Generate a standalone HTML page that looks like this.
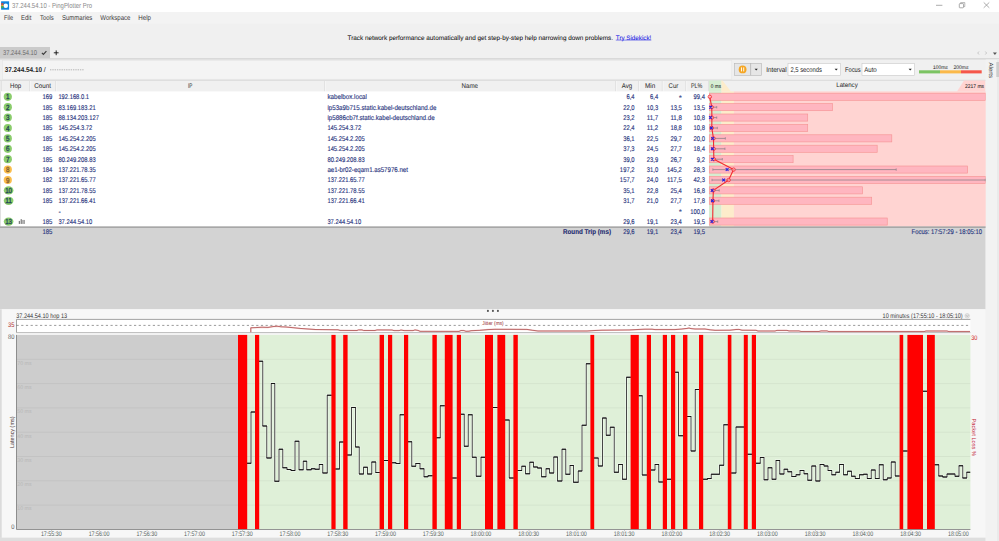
<!DOCTYPE html>
<html><head><meta charset="utf-8"><title>37.244.54.10 - PingPlotter Pro</title>
<style>
html,body{margin:0;padding:0;background:#f0f0f0;overflow:hidden;}
body{width:999px;height:541px;font-family:"Liberation Sans",sans-serif;}
svg{display:block;position:absolute;left:0;top:0;font-family:"Liberation Sans",sans-serif;}
text{white-space:pre;}
</style></head><body>
<svg width="999" height="541" viewBox="0 0 999 541" text-rendering="geometricPrecision">
<rect x="0.00" y="0.00" width="999.00" height="541.00" fill="#f0f0f0" />
<rect x="0.00" y="0.00" width="999.00" height="12.00" fill="#ffffff" />
<rect x="1.10" y="1.30" width="8.00" height="8.40" fill="#0f83dd" />
<rect x="1.20" y="3.20" width="2.30" height="1.60" fill="#e8432e" />
<rect x="1.20" y="4.80" width="2.30" height="1.50" fill="#f5a623" />
<rect x="1.20" y="6.30" width="2.30" height="1.80" fill="#4caf3c" />
<circle cx="5.8" cy="5.7" r="2.2" fill="#fff"/>
<rect x="0.00" y="12.00" width="999.00" height="11.60" fill="#f3f3f3" />
<text x="12.00" y="8.39" font-size="7.3" fill="#8a8a8a" textLength="80.00" lengthAdjust="spacingAndGlyphs" >37.244.54.10 - PingPlotter Pro</text>
<line x1="936.00" y1="5.30" x2="942.40" y2="5.30" stroke="#8a8a8a" stroke-width="0.7" />
<rect x="959.3" y="3.6" width="4.2" height="4.2" rx="0.6" fill="none" stroke="#8a8a8a" stroke-width="0.7"/>
<path d="M960.6 3.4 V2.6 H964.8 V6.6 H963.8" fill="none" stroke="#8a8a8a" stroke-width="0.6"/>
<path d="M983.7 2.4 L989.3 7.8 M989.3 2.4 L983.7 7.8" stroke="#8a8a8a" stroke-width="0.7"/>
<text x="4.00" y="20.22" font-size="7.1" fill="#3a3a3a" textLength="9.00" lengthAdjust="spacingAndGlyphs" >File</text>
<text x="21.00" y="20.22" font-size="7.1" fill="#3a3a3a" textLength="10.30" lengthAdjust="spacingAndGlyphs" >Edit</text>
<text x="40.00" y="20.22" font-size="7.1" fill="#3a3a3a" textLength="13.80" lengthAdjust="spacingAndGlyphs" >Tools</text>
<text x="62.00" y="20.22" font-size="7.1" fill="#3a3a3a" textLength="30.30" lengthAdjust="spacingAndGlyphs" >Summaries</text>
<text x="100.30" y="20.22" font-size="7.1" fill="#3a3a3a" textLength="30.20" lengthAdjust="spacingAndGlyphs" >Workspace</text>
<text x="138.30" y="20.22" font-size="7.1" fill="#3a3a3a" textLength="12.70" lengthAdjust="spacingAndGlyphs" >Help</text>
<text x="347.50" y="39.77" font-size="6.4" fill="#111" stroke="#111" stroke-width="0.05" textLength="265.50" lengthAdjust="spacingAndGlyphs" >Track network performance automatically and get step-by-step help narrowing down problems.</text>
<text x="615.80" y="39.77" font-size="6.4" fill="#1a1ae6" stroke="#1a1ae6" stroke-width="0.05" textLength="35.50" lengthAdjust="spacingAndGlyphs" >Try Sidekick!</text>
<line x1="615.80" y1="40.10" x2="651.30" y2="40.10" stroke="#1a1ae6" stroke-width="0.5" />
<rect x="0.00" y="47.00" width="50.00" height="11.50" fill="#cbcbcb" />
<text x="3.00" y="55.19" font-size="7.0" fill="#6a6a6a" textLength="34.00" lengthAdjust="spacingAndGlyphs" >37.244.54.10</text>
<path d="M41.9 52.9 L43.4 54.5 L46.4 51.1" fill="none" stroke="#3c3c3c" stroke-width="1.15"/>
<path d="M53.8 52.8 H58.6 M56.2 50.4 V55.2" stroke="#111" stroke-width="0.9"/>
<path d="M979 51.5 L977.7 53 L979 54.5" fill="none" stroke="#aaa" stroke-width="0.6"/>
<path d="M985.3 51.5 L986.6 53 L985.3 54.5" fill="none" stroke="#aaa" stroke-width="0.6"/>
<path d="M992.9 52.6 L996.9 52.6 L994.9 55 Z" fill="#555"/>
<line x1="0.00" y1="58.90" x2="999.00" y2="58.90" stroke="#d2d2d2" stroke-width="1.1" />
<rect x="2.4" y="60.6" width="729.4" height="18.6" fill="#f4f4f4" stroke="#e4e4e4" stroke-width="0.6"/>
<text x="4.70" y="72.19" font-size="7.0" fill="#222" font-weight="bold" textLength="37.30" lengthAdjust="spacingAndGlyphs" >37.244.54.10</text>
<text x="43.80" y="72.19" font-size="7.0" fill="#333" stroke="#333" stroke-width="0.05" >/</text>
<line x1="50.00" y1="69.80" x2="84.00" y2="69.80" stroke="#777" stroke-width="0.5" stroke-dasharray="1.4 0.9"/>
<rect x="734.5" y="63.5" width="16.3" height="11.8" fill="#e6e6e6" stroke="#b5b5b5" stroke-width="0.6"/>
<rect x="750.8" y="63.5" width="10.8" height="11.8" fill="#e6e6e6" stroke="#b5b5b5" stroke-width="0.6"/>
<circle cx="742.6" cy="69.4" r="3.9" fill="#f5a623"/>
<path d="M741.5 67.4 V71.4 M743.7 67.4 V71.4" stroke="#fff" stroke-width="0.9"/>
<path d="M754.6 68.7 H757.8 L756.2 70.6 Z" fill="#222"/>
<text x="766.20" y="71.98" font-size="7.0" fill="#222" textLength="20.50" lengthAdjust="spacingAndGlyphs" >Interval</text>
<rect x="788" y="63.5" width="52.6" height="11.8" fill="#fff" stroke="#c9c9c9" stroke-width="0.6"/>
<text x="790.40" y="71.95" font-size="6.9" fill="#222" textLength="31.50" lengthAdjust="spacingAndGlyphs" >2,5 seconds</text>
<path d="M834.6 68.7 H837.8 L836.2 70.6 Z" fill="#222"/>
<text x="845.00" y="71.98" font-size="7.0" fill="#222" textLength="15.60" lengthAdjust="spacingAndGlyphs" >Focus</text>
<rect x="862" y="63.5" width="52.6" height="11.8" fill="#fff" stroke="#c9c9c9" stroke-width="0.6"/>
<text x="864.20" y="71.95" font-size="6.9" fill="#222" textLength="12.60" lengthAdjust="spacingAndGlyphs" >Auto</text>
<path d="M908.6 68.7 H911.8 L910.2 70.6 Z" fill="#222"/>
<rect x="919.00" y="70.30" width="21.00" height="3.10" fill="#7cc463" />
<rect x="940.00" y="70.30" width="21.00" height="3.10" fill="#fbb94a" />
<rect x="961.00" y="70.30" width="20.70" height="3.10" fill="#f5574b" />
<text x="933.00" y="68.85" font-size="5.2" fill="#333" stroke="#333" stroke-width="0.05" textLength="14.80" lengthAdjust="spacingAndGlyphs" >100ms</text>
<text x="953.60" y="68.85" font-size="5.2" fill="#333" stroke="#333" stroke-width="0.05" textLength="14.80" lengthAdjust="spacingAndGlyphs" >200ms</text>
<line x1="0.00" y1="80.30" x2="985.50" y2="80.30" stroke="#d3d3d3" stroke-width="0.8" />
<line x1="29.60" y1="81.00" x2="29.60" y2="91.40" stroke="#d4d4d4" stroke-width="0.7" />
<line x1="30.30" y1="81.00" x2="30.30" y2="91.40" stroke="#fbfbfb" stroke-width="0.7" />
<line x1="55.50" y1="81.00" x2="55.50" y2="91.40" stroke="#d4d4d4" stroke-width="0.7" />
<line x1="56.20" y1="81.00" x2="56.20" y2="91.40" stroke="#fbfbfb" stroke-width="0.7" />
<line x1="324.60" y1="81.00" x2="324.60" y2="91.40" stroke="#d4d4d4" stroke-width="0.7" />
<line x1="325.30" y1="81.00" x2="325.30" y2="91.40" stroke="#fbfbfb" stroke-width="0.7" />
<line x1="615.60" y1="81.00" x2="615.60" y2="91.40" stroke="#d4d4d4" stroke-width="0.7" />
<line x1="616.30" y1="81.00" x2="616.30" y2="91.40" stroke="#fbfbfb" stroke-width="0.7" />
<line x1="638.60" y1="81.00" x2="638.60" y2="91.40" stroke="#d4d4d4" stroke-width="0.7" />
<line x1="639.30" y1="81.00" x2="639.30" y2="91.40" stroke="#fbfbfb" stroke-width="0.7" />
<line x1="662.30" y1="81.00" x2="662.30" y2="91.40" stroke="#d4d4d4" stroke-width="0.7" />
<line x1="663.00" y1="81.00" x2="663.00" y2="91.40" stroke="#fbfbfb" stroke-width="0.7" />
<line x1="685.90" y1="81.00" x2="685.90" y2="91.40" stroke="#d4d4d4" stroke-width="0.7" />
<line x1="686.60" y1="81.00" x2="686.60" y2="91.40" stroke="#fbfbfb" stroke-width="0.7" />
<line x1="708.60" y1="81.00" x2="708.60" y2="91.40" stroke="#d4d4d4" stroke-width="0.7" />
<line x1="709.30" y1="81.00" x2="709.30" y2="91.40" stroke="#fbfbfb" stroke-width="0.7" />
<line x1="1.20" y1="81.00" x2="1.20" y2="91.40" stroke="#d4d4d4" stroke-width="0.7" />
<text x="10.00" y="88.21" font-size="6.8" fill="#303030" stroke="#303030" stroke-width="0.05" textLength="11.20" lengthAdjust="spacingAndGlyphs" >Hop</text>
<text x="34.30" y="88.21" font-size="6.8" fill="#303030" stroke="#303030" stroke-width="0.05" textLength="16.60" lengthAdjust="spacingAndGlyphs" >Count</text>
<text x="188.00" y="88.21" font-size="6.8" fill="#303030" stroke="#303030" stroke-width="0.05" textLength="4.40" lengthAdjust="spacingAndGlyphs" >IP</text>
<text x="461.55" y="88.21" font-size="6.8" fill="#303030" stroke="#303030" stroke-width="0.05" textLength="16.50" lengthAdjust="spacingAndGlyphs" >Name</text>
<text x="621.70" y="88.21" font-size="6.8" fill="#303030" stroke="#303030" stroke-width="0.05" textLength="10.40" lengthAdjust="spacingAndGlyphs" >Avg</text>
<text x="645.10" y="88.21" font-size="6.8" fill="#303030" stroke="#303030" stroke-width="0.05" textLength="10.20" lengthAdjust="spacingAndGlyphs" >Min</text>
<text x="668.60" y="88.21" font-size="6.8" fill="#303030" stroke="#303030" stroke-width="0.05" textLength="9.60" lengthAdjust="spacingAndGlyphs" >Cur</text>
<text x="690.90" y="88.21" font-size="6.8" fill="#303030" stroke="#303030" stroke-width="0.05" textLength="11.40" lengthAdjust="spacingAndGlyphs" >PL%</text>
<rect x="709.00" y="80.50" width="12.46" height="10.90" fill="#d6edd1" />
<path d="M721.46 80.5 L722.46 80.5 L730.93 91.4 L721.46 91.4 Z" fill="#fdeccb"/>
<path d="M964 80.5 L985.3 80.5 L985.3 91.4 L957 91.4 Z" fill="#ffd4d2"/>
<text x="710.80" y="88.02" font-size="5.4" fill="#222" stroke="#222" stroke-width="0.05" textLength="10.20" lengthAdjust="spacingAndGlyphs" >0 ms</text>
<text x="836.25" y="87.14" font-size="6.6" fill="#303030" stroke="#303030" stroke-width="0.05" textLength="21.50" lengthAdjust="spacingAndGlyphs" >Latency</text>
<text x="965.00" y="88.12" font-size="5.4" fill="#222" stroke="#222" stroke-width="0.05" textLength="19.00" lengthAdjust="spacingAndGlyphs" >2217 ms</text>
<rect x="0.00" y="91.40" width="709.00" height="135.20" fill="#ffffff" />
<rect x="709.00" y="91.40" width="12.46" height="135.20" fill="#d6edd1" />
<rect x="721.46" y="91.40" width="12.46" height="135.20" fill="#fdeccb" />
<rect x="733.93" y="91.40" width="251.97" height="135.20" fill="#ffd4d2" />
<circle cx="7.8" cy="96.80" r="4.1" fill="#8bcd6c"/>
<text x="6.05" y="99.33" font-size="7.4" fill="#1b3c55" stroke="#1b3c55" stroke-width="0.3" textLength="3.50" lengthAdjust="spacingAndGlyphs" >1</text>
<text x="42.44" y="99.25" font-size="6.9" fill="#27337d" stroke="#27337d" stroke-width="0.13" textLength="9.96" lengthAdjust="spacingAndGlyphs" >169</text>
<text x="58.40" y="99.25" font-size="6.9" fill="#27337d" stroke="#27337d" stroke-width="0.13" textLength="30.61" lengthAdjust="spacingAndGlyphs" >192.168.0.1</text>
<text x="327.40" y="99.25" font-size="6.9" fill="#27337d" stroke="#27337d" stroke-width="0.13" textLength="39.50" lengthAdjust="spacingAndGlyphs" >kabelbox.local</text>
<text x="626.51" y="99.25" font-size="6.9" fill="#27337d" stroke="#27337d" stroke-width="0.13" textLength="8.09" lengthAdjust="spacingAndGlyphs" >6,4</text>
<text x="650.11" y="99.25" font-size="6.9" fill="#27337d" stroke="#27337d" stroke-width="0.13" textLength="8.09" lengthAdjust="spacingAndGlyphs" >6,4</text>
<text x="679.11" y="100.05" font-size="6.9" fill="#27337d" stroke="#27337d" stroke-width="0.13" >*</text>
<text x="693.49" y="99.25" font-size="6.9" fill="#27337d" stroke="#27337d" stroke-width="0.13" textLength="11.41" lengthAdjust="spacingAndGlyphs" >99,4</text>
<rect x="709.30" y="93.20" width="276.00" height="7.1" fill="#ffb6c0" stroke="#f69494" stroke-width="0.65"/>
<circle cx="7.8" cy="107.20" r="4.1" fill="#8bcd6c"/>
<text x="6.05" y="109.73" font-size="7.4" fill="#1b3c55" stroke="#1b3c55" stroke-width="0.3" textLength="3.50" lengthAdjust="spacingAndGlyphs" >2</text>
<text x="42.44" y="109.65" font-size="6.9" fill="#27337d" stroke="#27337d" stroke-width="0.13" textLength="9.96" lengthAdjust="spacingAndGlyphs" >185</text>
<text x="58.40" y="109.65" font-size="6.9" fill="#27337d" stroke="#27337d" stroke-width="0.13" textLength="37.25" lengthAdjust="spacingAndGlyphs" >83.169.183.21</text>
<text x="327.40" y="109.65" font-size="6.9" fill="#27337d" stroke="#27337d" stroke-width="0.13" textLength="109.00" lengthAdjust="spacingAndGlyphs" >ip53a9b715.static.kabel-deutschland.de</text>
<text x="623.19" y="109.65" font-size="6.9" fill="#27337d" stroke="#27337d" stroke-width="0.13" textLength="11.41" lengthAdjust="spacingAndGlyphs" >22,0</text>
<text x="646.79" y="109.65" font-size="6.9" fill="#27337d" stroke="#27337d" stroke-width="0.13" textLength="11.41" lengthAdjust="spacingAndGlyphs" >10,3</text>
<text x="670.39" y="109.65" font-size="6.9" fill="#27337d" stroke="#27337d" stroke-width="0.13" textLength="11.41" lengthAdjust="spacingAndGlyphs" >13,5</text>
<text x="693.49" y="109.65" font-size="6.9" fill="#27337d" stroke="#27337d" stroke-width="0.13" textLength="11.41" lengthAdjust="spacingAndGlyphs" >13,5</text>
<rect x="709.30" y="103.60" width="123.09" height="7.1" fill="#ffb6c0" stroke="#f69494" stroke-width="0.65"/>
<circle cx="7.8" cy="117.60" r="4.1" fill="#8bcd6c"/>
<text x="6.05" y="120.13" font-size="7.4" fill="#1b3c55" stroke="#1b3c55" stroke-width="0.3" textLength="3.50" lengthAdjust="spacingAndGlyphs" >3</text>
<text x="42.44" y="120.05" font-size="6.9" fill="#27337d" stroke="#27337d" stroke-width="0.13" textLength="9.96" lengthAdjust="spacingAndGlyphs" >185</text>
<text x="58.40" y="120.05" font-size="6.9" fill="#27337d" stroke="#27337d" stroke-width="0.13" textLength="40.57" lengthAdjust="spacingAndGlyphs" >88.134.203.127</text>
<text x="327.40" y="120.05" font-size="6.9" fill="#27337d" stroke="#27337d" stroke-width="0.13" textLength="107.30" lengthAdjust="spacingAndGlyphs" >ip5886cb7f.static.kabel-deutschland.de</text>
<text x="623.19" y="120.05" font-size="6.9" fill="#27337d" stroke="#27337d" stroke-width="0.13" textLength="11.41" lengthAdjust="spacingAndGlyphs" >23,2</text>
<text x="646.79" y="120.05" font-size="6.9" fill="#27337d" stroke="#27337d" stroke-width="0.13" textLength="11.41" lengthAdjust="spacingAndGlyphs" >11,7</text>
<text x="670.39" y="120.05" font-size="6.9" fill="#27337d" stroke="#27337d" stroke-width="0.13" textLength="11.41" lengthAdjust="spacingAndGlyphs" >11,8</text>
<text x="693.49" y="120.05" font-size="6.9" fill="#27337d" stroke="#27337d" stroke-width="0.13" textLength="11.41" lengthAdjust="spacingAndGlyphs" >10,8</text>
<rect x="709.30" y="114.00" width="98.41" height="7.1" fill="#ffb6c0" stroke="#f69494" stroke-width="0.65"/>
<circle cx="7.8" cy="128.00" r="4.1" fill="#8bcd6c"/>
<text x="6.05" y="130.53" font-size="7.4" fill="#1b3c55" stroke="#1b3c55" stroke-width="0.3" textLength="3.50" lengthAdjust="spacingAndGlyphs" >4</text>
<text x="42.44" y="130.45" font-size="6.9" fill="#27337d" stroke="#27337d" stroke-width="0.13" textLength="9.96" lengthAdjust="spacingAndGlyphs" >185</text>
<text x="58.40" y="130.45" font-size="6.9" fill="#27337d" stroke="#27337d" stroke-width="0.13" textLength="33.93" lengthAdjust="spacingAndGlyphs" >145.254.3.72</text>
<text x="327.40" y="130.45" font-size="6.9" fill="#27337d" stroke="#27337d" stroke-width="0.13" textLength="33.93" lengthAdjust="spacingAndGlyphs" >145.254.3.72</text>
<text x="623.19" y="130.45" font-size="6.9" fill="#27337d" stroke="#27337d" stroke-width="0.13" textLength="11.41" lengthAdjust="spacingAndGlyphs" >22,4</text>
<text x="646.79" y="130.45" font-size="6.9" fill="#27337d" stroke="#27337d" stroke-width="0.13" textLength="11.41" lengthAdjust="spacingAndGlyphs" >11,2</text>
<text x="670.39" y="130.45" font-size="6.9" fill="#27337d" stroke="#27337d" stroke-width="0.13" textLength="11.41" lengthAdjust="spacingAndGlyphs" >18,8</text>
<text x="693.49" y="130.45" font-size="6.9" fill="#27337d" stroke="#27337d" stroke-width="0.13" textLength="11.41" lengthAdjust="spacingAndGlyphs" >10,8</text>
<rect x="709.30" y="124.40" width="98.41" height="7.1" fill="#ffb6c0" stroke="#f69494" stroke-width="0.65"/>
<circle cx="7.8" cy="138.40" r="4.1" fill="#8bcd6c"/>
<text x="6.05" y="140.93" font-size="7.4" fill="#1b3c55" stroke="#1b3c55" stroke-width="0.3" textLength="3.50" lengthAdjust="spacingAndGlyphs" >5</text>
<text x="42.44" y="140.85" font-size="6.9" fill="#27337d" stroke="#27337d" stroke-width="0.13" textLength="9.96" lengthAdjust="spacingAndGlyphs" >185</text>
<text x="58.40" y="140.85" font-size="6.9" fill="#27337d" stroke="#27337d" stroke-width="0.13" textLength="37.25" lengthAdjust="spacingAndGlyphs" >145.254.2.205</text>
<text x="327.40" y="140.85" font-size="6.9" fill="#27337d" stroke="#27337d" stroke-width="0.13" textLength="37.25" lengthAdjust="spacingAndGlyphs" >145.254.2.205</text>
<text x="623.19" y="140.85" font-size="6.9" fill="#27337d" stroke="#27337d" stroke-width="0.13" textLength="11.41" lengthAdjust="spacingAndGlyphs" >36,1</text>
<text x="646.79" y="140.85" font-size="6.9" fill="#27337d" stroke="#27337d" stroke-width="0.13" textLength="11.41" lengthAdjust="spacingAndGlyphs" >22,5</text>
<text x="670.39" y="140.85" font-size="6.9" fill="#27337d" stroke="#27337d" stroke-width="0.13" textLength="11.41" lengthAdjust="spacingAndGlyphs" >29,7</text>
<text x="693.49" y="140.85" font-size="6.9" fill="#27337d" stroke="#27337d" stroke-width="0.13" textLength="11.41" lengthAdjust="spacingAndGlyphs" >20,0</text>
<rect x="709.30" y="134.80" width="182.50" height="7.1" fill="#ffb6c0" stroke="#f69494" stroke-width="0.65"/>
<circle cx="7.8" cy="148.80" r="4.1" fill="#8bcd6c"/>
<text x="6.05" y="151.33" font-size="7.4" fill="#1b3c55" stroke="#1b3c55" stroke-width="0.3" textLength="3.50" lengthAdjust="spacingAndGlyphs" >6</text>
<text x="42.44" y="151.25" font-size="6.9" fill="#27337d" stroke="#27337d" stroke-width="0.13" textLength="9.96" lengthAdjust="spacingAndGlyphs" >185</text>
<text x="58.40" y="151.25" font-size="6.9" fill="#27337d" stroke="#27337d" stroke-width="0.13" textLength="37.25" lengthAdjust="spacingAndGlyphs" >145.254.2.205</text>
<text x="327.40" y="151.25" font-size="6.9" fill="#27337d" stroke="#27337d" stroke-width="0.13" textLength="37.25" lengthAdjust="spacingAndGlyphs" >145.254.2.205</text>
<text x="623.19" y="151.25" font-size="6.9" fill="#27337d" stroke="#27337d" stroke-width="0.13" textLength="11.41" lengthAdjust="spacingAndGlyphs" >37,3</text>
<text x="646.79" y="151.25" font-size="6.9" fill="#27337d" stroke="#27337d" stroke-width="0.13" textLength="11.41" lengthAdjust="spacingAndGlyphs" >24,5</text>
<text x="670.39" y="151.25" font-size="6.9" fill="#27337d" stroke="#27337d" stroke-width="0.13" textLength="11.41" lengthAdjust="spacingAndGlyphs" >27,7</text>
<text x="693.49" y="151.25" font-size="6.9" fill="#27337d" stroke="#27337d" stroke-width="0.13" textLength="11.41" lengthAdjust="spacingAndGlyphs" >18,4</text>
<rect x="709.30" y="145.20" width="167.88" height="7.1" fill="#ffb6c0" stroke="#f69494" stroke-width="0.65"/>
<circle cx="7.8" cy="159.20" r="4.1" fill="#8bcd6c"/>
<text x="6.05" y="161.73" font-size="7.4" fill="#1b3c55" stroke="#1b3c55" stroke-width="0.3" textLength="3.50" lengthAdjust="spacingAndGlyphs" >7</text>
<text x="42.44" y="161.65" font-size="6.9" fill="#27337d" stroke="#27337d" stroke-width="0.13" textLength="9.96" lengthAdjust="spacingAndGlyphs" >185</text>
<text x="58.40" y="161.65" font-size="6.9" fill="#27337d" stroke="#27337d" stroke-width="0.13" textLength="37.25" lengthAdjust="spacingAndGlyphs" >80.249.208.83</text>
<text x="327.40" y="161.65" font-size="6.9" fill="#27337d" stroke="#27337d" stroke-width="0.13" textLength="37.25" lengthAdjust="spacingAndGlyphs" >80.249.208.83</text>
<text x="623.19" y="161.65" font-size="6.9" fill="#27337d" stroke="#27337d" stroke-width="0.13" textLength="11.41" lengthAdjust="spacingAndGlyphs" >39,0</text>
<text x="646.79" y="161.65" font-size="6.9" fill="#27337d" stroke="#27337d" stroke-width="0.13" textLength="11.41" lengthAdjust="spacingAndGlyphs" >23,9</text>
<text x="670.39" y="161.65" font-size="6.9" fill="#27337d" stroke="#27337d" stroke-width="0.13" textLength="11.41" lengthAdjust="spacingAndGlyphs" >26,7</text>
<text x="696.81" y="161.65" font-size="6.9" fill="#27337d" stroke="#27337d" stroke-width="0.13" textLength="8.09" lengthAdjust="spacingAndGlyphs" >9,2</text>
<rect x="709.30" y="155.60" width="83.79" height="7.1" fill="#ffb6c0" stroke="#f69494" stroke-width="0.65"/>
<circle cx="7.8" cy="169.60" r="4.1" fill="#f9bd4b"/>
<text x="6.05" y="172.13" font-size="7.4" fill="#7a5830" stroke="#7a5830" stroke-width="0.3" textLength="3.50" lengthAdjust="spacingAndGlyphs" >8</text>
<text x="42.44" y="172.05" font-size="6.9" fill="#27337d" stroke="#27337d" stroke-width="0.13" textLength="9.96" lengthAdjust="spacingAndGlyphs" >184</text>
<text x="58.40" y="172.05" font-size="6.9" fill="#27337d" stroke="#27337d" stroke-width="0.13" textLength="37.25" lengthAdjust="spacingAndGlyphs" >137.221.78.35</text>
<text x="327.40" y="172.05" font-size="6.9" fill="#27337d" stroke="#27337d" stroke-width="0.13" textLength="80.50" lengthAdjust="spacingAndGlyphs" >ae1-br02-eqam1.as57976.net</text>
<text x="619.87" y="172.05" font-size="6.9" fill="#27337d" stroke="#27337d" stroke-width="0.13" textLength="14.73" lengthAdjust="spacingAndGlyphs" >197,2</text>
<text x="646.79" y="172.05" font-size="6.9" fill="#27337d" stroke="#27337d" stroke-width="0.13" textLength="11.41" lengthAdjust="spacingAndGlyphs" >31,0</text>
<text x="667.07" y="172.05" font-size="6.9" fill="#27337d" stroke="#27337d" stroke-width="0.13" textLength="14.73" lengthAdjust="spacingAndGlyphs" >145,2</text>
<text x="693.49" y="172.05" font-size="6.9" fill="#27337d" stroke="#27337d" stroke-width="0.13" textLength="11.41" lengthAdjust="spacingAndGlyphs" >28,3</text>
<rect x="709.30" y="166.00" width="258.36" height="7.1" fill="#ffb6c0" stroke="#f69494" stroke-width="0.65"/>
<circle cx="7.8" cy="180.00" r="4.1" fill="#f9bd4b"/>
<text x="6.05" y="182.53" font-size="7.4" fill="#7a5830" stroke="#7a5830" stroke-width="0.3" textLength="3.50" lengthAdjust="spacingAndGlyphs" >9</text>
<text x="42.44" y="182.45" font-size="6.9" fill="#27337d" stroke="#27337d" stroke-width="0.13" textLength="9.96" lengthAdjust="spacingAndGlyphs" >182</text>
<text x="58.40" y="182.45" font-size="6.9" fill="#27337d" stroke="#27337d" stroke-width="0.13" textLength="37.25" lengthAdjust="spacingAndGlyphs" >137.221.65.77</text>
<text x="327.40" y="182.45" font-size="6.9" fill="#27337d" stroke="#27337d" stroke-width="0.13" textLength="37.25" lengthAdjust="spacingAndGlyphs" >137.221.65.77</text>
<text x="619.87" y="182.45" font-size="6.9" fill="#27337d" stroke="#27337d" stroke-width="0.13" textLength="14.73" lengthAdjust="spacingAndGlyphs" >157,7</text>
<text x="646.79" y="182.45" font-size="6.9" fill="#27337d" stroke="#27337d" stroke-width="0.13" textLength="11.41" lengthAdjust="spacingAndGlyphs" >24,0</text>
<text x="667.07" y="182.45" font-size="6.9" fill="#27337d" stroke="#27337d" stroke-width="0.13" textLength="14.73" lengthAdjust="spacingAndGlyphs" >117,5</text>
<text x="693.49" y="182.45" font-size="6.9" fill="#27337d" stroke="#27337d" stroke-width="0.13" textLength="11.41" lengthAdjust="spacingAndGlyphs" >42,3</text>
<rect x="709.30" y="176.40" width="276.00" height="7.1" fill="#ffb6c0" stroke="#f69494" stroke-width="0.65"/>
<ellipse cx="8.6" cy="190.40" rx="4.85" ry="4.15" fill="#8bcd6c"/>
<text x="5.20" y="192.93" font-size="7.4" fill="#1b3c55" stroke="#1b3c55" stroke-width="0.3" textLength="6.80" lengthAdjust="spacingAndGlyphs" >10</text>
<text x="42.44" y="192.85" font-size="6.9" fill="#27337d" stroke="#27337d" stroke-width="0.13" textLength="9.96" lengthAdjust="spacingAndGlyphs" >185</text>
<text x="58.40" y="192.85" font-size="6.9" fill="#27337d" stroke="#27337d" stroke-width="0.13" textLength="37.25" lengthAdjust="spacingAndGlyphs" >137.221.78.55</text>
<text x="327.40" y="192.85" font-size="6.9" fill="#27337d" stroke="#27337d" stroke-width="0.13" textLength="37.25" lengthAdjust="spacingAndGlyphs" >137.221.78.55</text>
<text x="623.19" y="192.85" font-size="6.9" fill="#27337d" stroke="#27337d" stroke-width="0.13" textLength="11.41" lengthAdjust="spacingAndGlyphs" >35,1</text>
<text x="646.79" y="192.85" font-size="6.9" fill="#27337d" stroke="#27337d" stroke-width="0.13" textLength="11.41" lengthAdjust="spacingAndGlyphs" >22,8</text>
<text x="670.39" y="192.85" font-size="6.9" fill="#27337d" stroke="#27337d" stroke-width="0.13" textLength="11.41" lengthAdjust="spacingAndGlyphs" >25,4</text>
<text x="693.49" y="192.85" font-size="6.9" fill="#27337d" stroke="#27337d" stroke-width="0.13" textLength="11.41" lengthAdjust="spacingAndGlyphs" >16,8</text>
<rect x="709.30" y="186.80" width="153.25" height="7.1" fill="#ffb6c0" stroke="#f69494" stroke-width="0.65"/>
<ellipse cx="8.6" cy="200.80" rx="4.85" ry="4.15" fill="#8bcd6c"/>
<text x="5.20" y="203.33" font-size="7.4" fill="#1b3c55" stroke="#1b3c55" stroke-width="0.3" textLength="6.80" lengthAdjust="spacingAndGlyphs" >11</text>
<text x="42.44" y="203.25" font-size="6.9" fill="#27337d" stroke="#27337d" stroke-width="0.13" textLength="9.96" lengthAdjust="spacingAndGlyphs" >185</text>
<text x="58.40" y="203.25" font-size="6.9" fill="#27337d" stroke="#27337d" stroke-width="0.13" textLength="37.25" lengthAdjust="spacingAndGlyphs" >137.221.66.41</text>
<text x="327.40" y="203.25" font-size="6.9" fill="#27337d" stroke="#27337d" stroke-width="0.13" textLength="37.25" lengthAdjust="spacingAndGlyphs" >137.221.66.41</text>
<text x="623.19" y="203.25" font-size="6.9" fill="#27337d" stroke="#27337d" stroke-width="0.13" textLength="11.41" lengthAdjust="spacingAndGlyphs" >31,7</text>
<text x="646.79" y="203.25" font-size="6.9" fill="#27337d" stroke="#27337d" stroke-width="0.13" textLength="11.41" lengthAdjust="spacingAndGlyphs" >21,0</text>
<text x="670.39" y="203.25" font-size="6.9" fill="#27337d" stroke="#27337d" stroke-width="0.13" textLength="11.41" lengthAdjust="spacingAndGlyphs" >27,7</text>
<text x="693.49" y="203.25" font-size="6.9" fill="#27337d" stroke="#27337d" stroke-width="0.13" textLength="11.41" lengthAdjust="spacingAndGlyphs" >17,8</text>
<rect x="709.30" y="197.20" width="162.39" height="7.1" fill="#ffb6c0" stroke="#f69494" stroke-width="0.65"/>
<text x="58.60" y="213.65" font-size="6.9" fill="#27337d" stroke="#27337d" stroke-width="0.13" >-</text>
<text x="679.11" y="214.45" font-size="6.9" fill="#27337d" stroke="#27337d" stroke-width="0.13" >*</text>
<text x="690.17" y="213.65" font-size="6.9" fill="#27337d" stroke="#27337d" stroke-width="0.13" textLength="14.73" lengthAdjust="spacingAndGlyphs" >100,0</text>
<ellipse cx="8.6" cy="221.60" rx="4.85" ry="4.15" fill="#8bcd6c"/>
<text x="5.20" y="224.13" font-size="7.4" fill="#1b3c55" stroke="#1b3c55" stroke-width="0.3" textLength="6.80" lengthAdjust="spacingAndGlyphs" >13</text>
<text x="42.44" y="224.05" font-size="6.9" fill="#27337d" stroke="#27337d" stroke-width="0.13" textLength="9.96" lengthAdjust="spacingAndGlyphs" >185</text>
<text x="58.40" y="224.05" font-size="6.9" fill="#27337d" stroke="#27337d" stroke-width="0.13" textLength="33.93" lengthAdjust="spacingAndGlyphs" >37.244.54.10</text>
<text x="327.40" y="224.05" font-size="6.9" fill="#27337d" stroke="#27337d" stroke-width="0.13" textLength="33.93" lengthAdjust="spacingAndGlyphs" >37.244.54.10</text>
<text x="623.19" y="224.05" font-size="6.9" fill="#27337d" stroke="#27337d" stroke-width="0.13" textLength="11.41" lengthAdjust="spacingAndGlyphs" >29,6</text>
<text x="646.79" y="224.05" font-size="6.9" fill="#27337d" stroke="#27337d" stroke-width="0.13" textLength="11.41" lengthAdjust="spacingAndGlyphs" >19,1</text>
<text x="670.39" y="224.05" font-size="6.9" fill="#27337d" stroke="#27337d" stroke-width="0.13" textLength="11.41" lengthAdjust="spacingAndGlyphs" >23,4</text>
<text x="693.49" y="224.05" font-size="6.9" fill="#27337d" stroke="#27337d" stroke-width="0.13" textLength="11.41" lengthAdjust="spacingAndGlyphs" >19,5</text>
<rect x="709.30" y="218.00" width="177.93" height="7.1" fill="#ffb6c0" stroke="#f69494" stroke-width="0.65"/>
<line x1="19.30" y1="223.95" x2="19.30" y2="220.95" stroke="#5e5e5e" stroke-width="1.0" />
<line x1="21.20" y1="223.95" x2="21.20" y2="219.15" stroke="#5e5e5e" stroke-width="1.0" />
<line x1="23.00" y1="223.95" x2="23.00" y2="219.95" stroke="#6a6a6a" stroke-width="1.0" />
<line x1="24.40" y1="223.95" x2="24.40" y2="219.95" stroke="#9a9a9a" stroke-width="1.0" />
<line x1="710.28" y1="107.20" x2="716.73" y2="107.20" stroke="#8d8088" stroke-width="0.8" />
<line x1="710.28" y1="106.00" x2="710.28" y2="108.40" stroke="#8d8088" stroke-width="0.7" />
<line x1="716.73" y1="106.00" x2="716.73" y2="108.40" stroke="#8d8088" stroke-width="0.7" />
<line x1="710.46" y1="117.60" x2="716.73" y2="117.60" stroke="#8d8088" stroke-width="0.8" />
<line x1="710.46" y1="116.40" x2="710.46" y2="118.80" stroke="#8d8088" stroke-width="0.7" />
<line x1="716.73" y1="116.40" x2="716.73" y2="118.80" stroke="#8d8088" stroke-width="0.7" />
<line x1="710.40" y1="128.00" x2="717.35" y2="128.00" stroke="#8d8088" stroke-width="0.8" />
<line x1="710.40" y1="126.80" x2="710.40" y2="129.20" stroke="#8d8088" stroke-width="0.7" />
<line x1="717.35" y1="126.80" x2="717.35" y2="129.20" stroke="#8d8088" stroke-width="0.7" />
<line x1="711.80" y1="138.40" x2="725.33" y2="138.40" stroke="#8d8088" stroke-width="0.8" />
<line x1="711.80" y1="137.20" x2="711.80" y2="139.60" stroke="#8d8088" stroke-width="0.7" />
<line x1="725.33" y1="137.20" x2="725.33" y2="139.60" stroke="#8d8088" stroke-width="0.7" />
<line x1="712.05" y1="148.80" x2="724.95" y2="148.80" stroke="#8d8088" stroke-width="0.8" />
<line x1="712.05" y1="147.60" x2="712.05" y2="150.00" stroke="#8d8088" stroke-width="0.7" />
<line x1="724.95" y1="147.60" x2="724.95" y2="150.00" stroke="#8d8088" stroke-width="0.7" />
<line x1="711.98" y1="159.20" x2="722.34" y2="159.20" stroke="#8d8088" stroke-width="0.8" />
<line x1="711.98" y1="158.00" x2="711.98" y2="160.40" stroke="#8d8088" stroke-width="0.7" />
<line x1="722.34" y1="158.00" x2="722.34" y2="160.40" stroke="#8d8088" stroke-width="0.7" />
<line x1="712.86" y1="169.60" x2="896.19" y2="169.60" stroke="#8d8088" stroke-width="0.8" />
<line x1="712.86" y1="168.40" x2="712.86" y2="170.80" stroke="#8d8088" stroke-width="0.7" />
<line x1="896.19" y1="168.40" x2="896.19" y2="170.80" stroke="#8d8088" stroke-width="0.7" />
<line x1="711.99" y1="180.00" x2="985.30" y2="180.00" stroke="#8d8088" stroke-width="0.8" />
<line x1="711.99" y1="178.80" x2="711.99" y2="181.20" stroke="#8d8088" stroke-width="0.7" />
<line x1="985.30" y1="178.80" x2="985.30" y2="181.20" stroke="#8d8088" stroke-width="0.7" />
<line x1="711.84" y1="190.40" x2="719.22" y2="190.40" stroke="#8d8088" stroke-width="0.8" />
<line x1="711.84" y1="189.20" x2="711.84" y2="191.60" stroke="#8d8088" stroke-width="0.7" />
<line x1="719.22" y1="189.20" x2="719.22" y2="191.60" stroke="#8d8088" stroke-width="0.7" />
<line x1="711.62" y1="200.80" x2="718.97" y2="200.80" stroke="#8d8088" stroke-width="0.8" />
<line x1="711.62" y1="199.60" x2="711.62" y2="202.00" stroke="#8d8088" stroke-width="0.7" />
<line x1="718.97" y1="199.60" x2="718.97" y2="202.00" stroke="#8d8088" stroke-width="0.7" />
<line x1="711.38" y1="221.60" x2="717.72" y2="221.60" stroke="#8d8088" stroke-width="0.8" />
<line x1="711.38" y1="220.40" x2="711.38" y2="222.80" stroke="#8d8088" stroke-width="0.7" />
<line x1="717.72" y1="220.40" x2="717.72" y2="222.80" stroke="#8d8088" stroke-width="0.7" />
<path d="M709.80 96.80 L711.74 107.20 L711.89 117.60 L711.79 128.00 L713.50 138.40 L713.65 148.80 L713.86 159.20 L733.58 169.60 L728.65 180.00 L713.37 190.40 L712.95 200.80 L712.69 221.60" fill="none" stroke="#f32a30" stroke-width="1.1" stroke-linejoin="round"/>
<circle cx="709.80" cy="96.80" r="1.7" fill="#ffd9dc" fill-opacity="0.5" stroke="#f32a30" stroke-width="0.85"/>
<circle cx="711.74" cy="107.20" r="1.7" fill="#ffd9dc" fill-opacity="0.5" stroke="#f32a30" stroke-width="0.85"/>
<circle cx="711.89" cy="117.60" r="1.7" fill="#ffd9dc" fill-opacity="0.5" stroke="#f32a30" stroke-width="0.85"/>
<circle cx="711.79" cy="128.00" r="1.7" fill="#ffd9dc" fill-opacity="0.5" stroke="#f32a30" stroke-width="0.85"/>
<circle cx="713.50" cy="138.40" r="1.7" fill="#ffd9dc" fill-opacity="0.5" stroke="#f32a30" stroke-width="0.85"/>
<circle cx="713.65" cy="148.80" r="1.7" fill="#ffd9dc" fill-opacity="0.5" stroke="#f32a30" stroke-width="0.85"/>
<circle cx="713.86" cy="159.20" r="1.7" fill="#ffd9dc" fill-opacity="0.5" stroke="#f32a30" stroke-width="0.85"/>
<circle cx="733.58" cy="169.60" r="1.7" fill="#ffd9dc" fill-opacity="0.5" stroke="#f32a30" stroke-width="0.85"/>
<circle cx="728.65" cy="180.00" r="1.7" fill="#ffd9dc" fill-opacity="0.5" stroke="#f32a30" stroke-width="0.85"/>
<circle cx="713.37" cy="190.40" r="1.7" fill="#ffd9dc" fill-opacity="0.5" stroke="#f32a30" stroke-width="0.85"/>
<circle cx="712.95" cy="200.80" r="1.7" fill="#ffd9dc" fill-opacity="0.5" stroke="#f32a30" stroke-width="0.85"/>
<circle cx="712.69" cy="221.60" r="1.7" fill="#ffd9dc" fill-opacity="0.5" stroke="#f32a30" stroke-width="0.85"/>
<path d="M709.28 105.80 L712.08 108.60 M709.28 108.60 L712.08 105.80" stroke="#2020e0" stroke-width="1.05"/>
<path d="M709.07 116.20 L711.87 119.00 M709.07 119.00 L711.87 116.20" stroke="#2020e0" stroke-width="1.05"/>
<path d="M709.94 126.60 L712.74 129.40 M709.94 129.40 L712.74 126.60" stroke="#2020e0" stroke-width="1.05"/>
<path d="M711.30 137.00 L714.10 139.80 M711.30 139.80 L714.10 137.00" stroke="#2020e0" stroke-width="1.05"/>
<path d="M711.05 147.40 L713.85 150.20 M711.05 150.20 L713.85 147.40" stroke="#2020e0" stroke-width="1.05"/>
<path d="M710.93 157.80 L713.73 160.60 M710.93 160.60 L713.73 157.80" stroke="#2020e0" stroke-width="1.05"/>
<path d="M725.70 168.20 L728.50 171.00 M725.70 171.00 L728.50 168.20" stroke="#2020e0" stroke-width="1.05"/>
<path d="M722.24 178.60 L725.04 181.40 M722.24 181.40 L725.04 178.60" stroke="#2020e0" stroke-width="1.05"/>
<path d="M710.77 189.00 L713.57 191.80 M710.77 191.80 L713.57 189.00" stroke="#2020e0" stroke-width="1.05"/>
<path d="M711.05 199.40 L713.85 202.20 M711.05 202.20 L713.85 199.40" stroke="#2020e0" stroke-width="1.05"/>
<path d="M710.52 220.20 L713.32 223.00 M710.52 223.00 L713.32 220.20" stroke="#2020e0" stroke-width="1.05"/>
<line x1="0.40" y1="91.40" x2="0.40" y2="226.60" stroke="#d4d4d4" stroke-width="0.8" />
<rect x="0.00" y="226.60" width="985.50" height="82.60" fill="#d3d3d3" />
<line x1="0.00" y1="227.10" x2="985.80" y2="227.10" stroke="#8a8a8a" stroke-width="1.0" />
<text x="42.44" y="234.05" font-size="6.9" fill="#27337d" stroke="#27337d" stroke-width="0.13" textLength="9.96" lengthAdjust="spacingAndGlyphs" >185</text>
<text x="563.00" y="234.05" font-size="6.9" fill="#1f2c70" stroke="#1f2c70" stroke-width="0.12" font-weight="bold" textLength="48.00" lengthAdjust="spacingAndGlyphs" >Round Trip (ms)</text>
<text x="623.19" y="234.05" font-size="6.9" fill="#27337d" stroke="#27337d" stroke-width="0.13" textLength="11.41" lengthAdjust="spacingAndGlyphs" >29,6</text>
<text x="646.79" y="234.05" font-size="6.9" fill="#27337d" stroke="#27337d" stroke-width="0.13" textLength="11.41" lengthAdjust="spacingAndGlyphs" >19,1</text>
<text x="670.39" y="234.05" font-size="6.9" fill="#27337d" stroke="#27337d" stroke-width="0.13" textLength="11.41" lengthAdjust="spacingAndGlyphs" >23,4</text>
<text x="693.49" y="234.05" font-size="6.9" fill="#27337d" stroke="#27337d" stroke-width="0.13" textLength="11.41" lengthAdjust="spacingAndGlyphs" >19,5</text>
<text x="911.60" y="234.05" font-size="6.9" fill="#27337d" stroke="#27337d" stroke-width="0.13" textLength="70.40" lengthAdjust="spacingAndGlyphs" >Focus: 17:57:29 - 18:05:10</text>
<rect x="0.00" y="309.20" width="985.50" height="228.50" fill="#f7f7f7" />
<rect x="0.00" y="537.70" width="985.50" height="3.30" fill="#dedede" />
<line x1="0.90" y1="309.20" x2="0.90" y2="537.70" stroke="#cfcfcf" stroke-width="1.2" />
<circle cx="487.9" cy="310.9" r="1.05" fill="#555"/>
<circle cx="492.9" cy="310.9" r="1.05" fill="#555"/>
<circle cx="497.9" cy="310.9" r="1.05" fill="#555"/>
<text x="16.20" y="318.08" font-size="6.7" fill="#333" textLength="51.00" lengthAdjust="spacingAndGlyphs" >37.244.54.10 hop 13</text>
<text x="882.60" y="318.08" font-size="6.7" fill="#333" textLength="80.00" lengthAdjust="spacingAndGlyphs" >10 minutes (17:55:10 - 18:05:10)</text>
<circle cx="967.2" cy="315.8" r="2.3" fill="#e4e4e4" stroke="#bdbdbd" stroke-width="0.4"/>
<path d="M966.1 315.3 L967.2 316.5 L968.3 315.3" fill="none" stroke="#888" stroke-width="0.5"/>
<rect x="16.50" y="319.40" width="953.90" height="13.20" fill="#ffffff" />
<line x1="16.50" y1="319.40" x2="970.40" y2="319.40" stroke="#8c8c8c" stroke-width="0.8" />
<line x1="16.50" y1="319.40" x2="16.50" y2="332.60" stroke="#8c8c8c" stroke-width="0.8" />
<line x1="16.50" y1="332.60" x2="970.40" y2="332.60" stroke="#a9a9a9" stroke-width="0.8" />
<line x1="16.50" y1="325.40" x2="970.40" y2="325.40" stroke="#555" stroke-width="0.6" stroke-dasharray="2.2 2.5"/>
<text x="8.00" y="326.94" font-size="6.6" fill="#b03030" textLength="6.40" lengthAdjust="spacingAndGlyphs" >35</text>
<rect x="481.50" y="320.20" width="23.00" height="6.60" fill="#ffffff" />
<text x="482.30" y="325.12" font-size="5.4" fill="#a03a3a" stroke="#a03a3a" stroke-width="0.05" textLength="21.40" lengthAdjust="spacingAndGlyphs" >Jitter (ms)</text>
<path d="M250.8 332.3 L250.8 327.8 L256.0 327.6 L262.0 327.2 L268.0 327.4 L273.0 326.6 L277.0 326.2 L281.0 326.8 L286.0 327.0 L292.0 327.6 L300.0 328.4 L308.0 329.0 L315.0 329.5 L338.0 329.8 L340.0 330.4 L357.0 330.5 L358.5 329.9 L362.0 329.9 L363.5 330.5 L375.0 330.5 L377.0 329.9 L392.0 330.0 L394.0 330.6 L399.0 330.6 L401.0 330.0 L404.0 330.6 L413.0 330.6 L415.0 329.9 L418.0 330.4 L420.0 331.3 L459.0 331.4 L461.0 330.5 L464.0 330.6 L466.0 331.3 L469.0 331.2 L471.0 330.7 L480.0 330.3 L488.0 329.6 L495.0 329.3 L527.0 329.4 L532.0 330.2 L538.0 331.0 L587.0 331.0 L595.0 330.5 L602.0 330.2 L630.0 329.9 L640.0 329.4 L645.0 329.2 L652.0 329.2 L655.0 329.6 L675.0 329.6 L682.0 329.0 L687.0 328.4 L689.0 328.0 L691.0 328.6 L695.0 329.0 L705.0 329.0 L710.0 329.8 L715.0 330.3 L730.0 330.2 L736.0 329.5 L739.0 329.4 L742.0 330.2 L756.0 330.3 L758.0 331.0 L775.0 331.0 L777.0 330.4 L787.0 330.4 L789.0 330.9 L799.0 330.9 L801.0 331.5 L819.0 331.5 L821.0 330.9 L827.0 330.9 L829.0 331.6 L924.0 331.6 L926.0 331.0 L947.0 331.0 L949.0 331.6 L970.0 331.6" fill="none" stroke="#f6cccc" stroke-width="1.5" stroke-linejoin="round"/>
<path d="M250.8 332.3 L250.8 327.8 L256.0 327.6 L262.0 327.2 L268.0 327.4 L273.0 326.6 L277.0 326.2 L281.0 326.8 L286.0 327.0 L292.0 327.6 L300.0 328.4 L308.0 329.0 L315.0 329.5 L338.0 329.8 L340.0 330.4 L357.0 330.5 L358.5 329.9 L362.0 329.9 L363.5 330.5 L375.0 330.5 L377.0 329.9 L392.0 330.0 L394.0 330.6 L399.0 330.6 L401.0 330.0 L404.0 330.6 L413.0 330.6 L415.0 329.9 L418.0 330.4 L420.0 331.3 L459.0 331.4 L461.0 330.5 L464.0 330.6 L466.0 331.3 L469.0 331.2 L471.0 330.7 L480.0 330.3 L488.0 329.6 L495.0 329.3 L527.0 329.4 L532.0 330.2 L538.0 331.0 L587.0 331.0 L595.0 330.5 L602.0 330.2 L630.0 329.9 L640.0 329.4 L645.0 329.2 L652.0 329.2 L655.0 329.6 L675.0 329.6 L682.0 329.0 L687.0 328.4 L689.0 328.0 L691.0 328.6 L695.0 329.0 L705.0 329.0 L710.0 329.8 L715.0 330.3 L730.0 330.2 L736.0 329.5 L739.0 329.4 L742.0 330.2 L756.0 330.3 L758.0 331.0 L775.0 331.0 L777.0 330.4 L787.0 330.4 L789.0 330.9 L799.0 330.9 L801.0 331.5 L819.0 331.5 L821.0 330.9 L827.0 330.9 L829.0 331.6 L924.0 331.6 L926.0 331.0 L947.0 331.0 L949.0 331.6 L970.0 331.6" fill="none" stroke="#a03c3c" stroke-width="0.7" stroke-linejoin="round"/>
<rect x="16.50" y="334.90" width="221.50" height="194.60" fill="#cdcdcd" />
<rect x="238.00" y="334.90" width="732.40" height="194.60" fill="#dff0d8" />
<line x1="16.50" y1="505.10" x2="970.40" y2="505.10" stroke="#000" stroke-width="0.7" stroke-opacity="0.07"/>
<text x="17.30" y="510.42" font-size="5.4" fill="#b9b9b9" stroke="#b9b9b9" stroke-width="0.05" textLength="14.20" lengthAdjust="spacingAndGlyphs" >10 ms</text>
<line x1="16.50" y1="480.80" x2="970.40" y2="480.80" stroke="#000" stroke-width="0.7" stroke-opacity="0.07"/>
<text x="17.30" y="486.12" font-size="5.4" fill="#b9b9b9" stroke="#b9b9b9" stroke-width="0.05" textLength="14.20" lengthAdjust="spacingAndGlyphs" >20 ms</text>
<line x1="16.50" y1="456.50" x2="970.40" y2="456.50" stroke="#000" stroke-width="0.7" stroke-opacity="0.07"/>
<text x="17.30" y="461.82" font-size="5.4" fill="#b9b9b9" stroke="#b9b9b9" stroke-width="0.05" textLength="14.20" lengthAdjust="spacingAndGlyphs" >30 ms</text>
<line x1="16.50" y1="432.20" x2="970.40" y2="432.20" stroke="#000" stroke-width="0.7" stroke-opacity="0.07"/>
<text x="17.30" y="437.52" font-size="5.4" fill="#b9b9b9" stroke="#b9b9b9" stroke-width="0.05" textLength="14.20" lengthAdjust="spacingAndGlyphs" >40 ms</text>
<line x1="16.50" y1="407.90" x2="970.40" y2="407.90" stroke="#000" stroke-width="0.7" stroke-opacity="0.07"/>
<text x="17.30" y="413.22" font-size="5.4" fill="#b9b9b9" stroke="#b9b9b9" stroke-width="0.05" textLength="14.20" lengthAdjust="spacingAndGlyphs" >50 ms</text>
<line x1="16.50" y1="383.60" x2="970.40" y2="383.60" stroke="#000" stroke-width="0.7" stroke-opacity="0.07"/>
<text x="17.30" y="388.92" font-size="5.4" fill="#b9b9b9" stroke="#b9b9b9" stroke-width="0.05" textLength="14.20" lengthAdjust="spacingAndGlyphs" >60 ms</text>
<line x1="16.50" y1="359.30" x2="970.40" y2="359.30" stroke="#000" stroke-width="0.7" stroke-opacity="0.07"/>
<text x="17.30" y="364.62" font-size="5.4" fill="#b9b9b9" stroke="#b9b9b9" stroke-width="0.05" textLength="14.20" lengthAdjust="spacingAndGlyphs" >70 ms</text>
<path d="M247.00 463.25 H251.00 V412.00 H255.00 H257.00 V361.25 H262.75 V426.00 H266.75 V458.00 H271.25 V383.50 H274.75 V481.25 H279.00 V449.25 H282.75 V467.75 H287.00 V469.50 H291.00 V470.50 H295.00 V441.25 H299.00 V469.75 H303.25 V461.25 H306.75 V469.75 H311.25 V468.75 H315.00 V469.25 H319.25 V464.50 H322.75 V473.00 H327.25 V395.25 H331.25 H333.38 V469.00 H339.50 V442.00 H343.25 H345.25 V455.00 H351.50 V407.50 H355.50 V447.00 H359.25 V474.00 H363.50 V467.25 H367.50 V474.00 H371.75 V462.00 H375.75 V472.50 H379.50 H381.50 V460.50 H388.00 H390.00 V462.75 H396.00 V463.50 H400.00 V414.75 H403.75 H405.75 V441.75 H411.75 V466.25 H415.75 V463.50 H420.00 V468.75 H424.00 V476.75 H428.00 V475.75 H432.00 H434.00 V437.75 H440.25 V405.75 H444.50 H448.38 V478.00 H456.50 H458.50 V414.25 H464.25 V446.25 H468.25 V414.75 H472.25 V457.25 H476.25 V476.25 H480.00 V476.25 H481.00 V457.25 H485.00 H489.00 V407.50 H497.25 H501.25 V420.00 H509.25 V478.00 H513.50 H515.62 V470.50 H521.75 V466.25 H525.50 V473.75 H529.75 V462.25 H533.50 V467.00 H537.50 V468.00 H541.50 V476.75 H546.00 V468.75 H549.50 V473.00 H553.75 V457.00 H557.50 V481.00 H562.00 V449.25 H565.75 V474.25 H570.00 V465.50 H573.50 V482.25 H578.25 V471.00 H582.00 V425.25 H586.25 V363.75 H590.25 H592.25 V458.00 H598.25 V466.00 H602.50 V418.00 H606.25 V435.25 H610.25 V427.25 H614.25 V472.25 H618.50 V464.50 H622.50 V479.25 H626.50 V377.25 H630.50 H634.75 V395.75 H642.25 V475.00 H646.75 H648.75 V470.00 H655.00 V464.50 H658.75 V482.00 H662.75 H664.75 V479.25 H671.00 H673.00 V372.25 H678.50 V435.75 H682.75 H684.88 V416.50 H691.00 V451.00 H695.25 V389.50 H699.00 H701.00 V479.25 H707.50 V478.50 H711.25 V474.25 H719.50 V465.25 H723.75 V424.75 H728.25 H729.88 V473.00 H736.00 V427.00 H744.00 H745.88 V454.25 H751.75 H753.75 V463.25 H760.25 V457.50 H764.00 V479.75 H768.00 V467.75 H772.00 V479.25 H776.00 V460.50 H779.75 V474.00 H784.00 V469.25 H787.75 V471.75 H791.75 V476.50 H796.00 V474.75 H800.00 V470.50 H804.00 V473.75 H807.75 V480.25 H811.75 V466.00 H815.75 V481.00 H820.00 V464.50 H824.00 V466.00 H828.00 V470.50 H831.75 V474.75 H835.75 V472.25 H839.50 V464.50 H843.50 V474.75 H847.50 V471.25 H851.50 V476.25 H855.25 V478.50 H859.50 V474.75 H863.50 V474.25 H867.25 V478.50 H871.25 V470.00 H875.25 V478.50 H879.25 V464.75 H883.25 V479.75 H887.25 V478.00 H891.25 V462.00 H895.25 V476.00 H899.25 H901.12 V451.00 H907.25 H915.00 V391.25 H927.00 H930.88 V464.75 H938.75 V476.00 H942.75 V477.00 H947.00 V474.00 H955.00 V476.25 H959.00 V465.75 H962.75 V478.00 H966.75 V472.25 H970.00" fill="none" stroke="#ffffff" stroke-opacity="0.7" stroke-width="2.0"/>
<path d="M247.00 463.25 H251.00 V412.00 H255.00 H257.00 V361.25 H262.75 V426.00 H266.75 V458.00 H271.25 V383.50 H274.75 V481.25 H279.00 V449.25 H282.75 V467.75 H287.00 V469.50 H291.00 V470.50 H295.00 V441.25 H299.00 V469.75 H303.25 V461.25 H306.75 V469.75 H311.25 V468.75 H315.00 V469.25 H319.25 V464.50 H322.75 V473.00 H327.25 V395.25 H331.25 H333.38 V469.00 H339.50 V442.00 H343.25 H345.25 V455.00 H351.50 V407.50 H355.50 V447.00 H359.25 V474.00 H363.50 V467.25 H367.50 V474.00 H371.75 V462.00 H375.75 V472.50 H379.50 H381.50 V460.50 H388.00 H390.00 V462.75 H396.00 V463.50 H400.00 V414.75 H403.75 H405.75 V441.75 H411.75 V466.25 H415.75 V463.50 H420.00 V468.75 H424.00 V476.75 H428.00 V475.75 H432.00 H434.00 V437.75 H440.25 V405.75 H444.50 H448.38 V478.00 H456.50 H458.50 V414.25 H464.25 V446.25 H468.25 V414.75 H472.25 V457.25 H476.25 V476.25 H480.00 V476.25 H481.00 V457.25 H485.00 H489.00 V407.50 H497.25 H501.25 V420.00 H509.25 V478.00 H513.50 H515.62 V470.50 H521.75 V466.25 H525.50 V473.75 H529.75 V462.25 H533.50 V467.00 H537.50 V468.00 H541.50 V476.75 H546.00 V468.75 H549.50 V473.00 H553.75 V457.00 H557.50 V481.00 H562.00 V449.25 H565.75 V474.25 H570.00 V465.50 H573.50 V482.25 H578.25 V471.00 H582.00 V425.25 H586.25 V363.75 H590.25 H592.25 V458.00 H598.25 V466.00 H602.50 V418.00 H606.25 V435.25 H610.25 V427.25 H614.25 V472.25 H618.50 V464.50 H622.50 V479.25 H626.50 V377.25 H630.50 H634.75 V395.75 H642.25 V475.00 H646.75 H648.75 V470.00 H655.00 V464.50 H658.75 V482.00 H662.75 H664.75 V479.25 H671.00 H673.00 V372.25 H678.50 V435.75 H682.75 H684.88 V416.50 H691.00 V451.00 H695.25 V389.50 H699.00 H701.00 V479.25 H707.50 V478.50 H711.25 V474.25 H719.50 V465.25 H723.75 V424.75 H728.25 H729.88 V473.00 H736.00 V427.00 H744.00 H745.88 V454.25 H751.75 H753.75 V463.25 H760.25 V457.50 H764.00 V479.75 H768.00 V467.75 H772.00 V479.25 H776.00 V460.50 H779.75 V474.00 H784.00 V469.25 H787.75 V471.75 H791.75 V476.50 H796.00 V474.75 H800.00 V470.50 H804.00 V473.75 H807.75 V480.25 H811.75 V466.00 H815.75 V481.00 H820.00 V464.50 H824.00 V466.00 H828.00 V470.50 H831.75 V474.75 H835.75 V472.25 H839.50 V464.50 H843.50 V474.75 H847.50 V471.25 H851.50 V476.25 H855.25 V478.50 H859.50 V474.75 H863.50 V474.25 H867.25 V478.50 H871.25 V470.00 H875.25 V478.50 H879.25 V464.75 H883.25 V479.75 H887.25 V478.00 H891.25 V462.00 H895.25 V476.00 H899.25 H901.12 V451.00 H907.25 H915.00 V391.25 H927.00 H930.88 V464.75 H938.75 V476.00 H942.75 V477.00 H947.00 V474.00 H955.00 V476.25 H959.00 V465.75 H962.75 V478.00 H966.75 V472.25 H970.00" fill="none" stroke="#262626" stroke-width="0.85"/>
<path d="M246.70 463.25 H251.30 M250.70 412.00 H255.30 M258.70 361.25 H263.05 M262.45 426.00 H267.05 M266.45 458.00 H271.55 M270.95 383.50 H275.05 M274.45 481.25 H279.30 M278.70 449.25 H283.05 M282.45 467.75 H287.30 M286.70 469.50 H291.30 M290.70 470.50 H295.30 M294.70 441.25 H299.30 M298.70 469.75 H303.55 M302.95 461.25 H307.05 M306.45 469.75 H311.55 M310.95 468.75 H315.30 M314.70 469.25 H319.55 M318.95 464.50 H323.05 M322.45 473.00 H327.55 M326.95 395.25 H331.55 M335.20 469.00 H339.80 M339.20 442.00 H343.55 M346.95 455.00 H351.80 M351.20 407.50 H355.80 M355.20 447.00 H359.55 M358.95 474.00 H363.80 M363.20 467.25 H367.80 M367.20 474.00 H372.05 M371.45 462.00 H376.05 M375.45 472.50 H379.80 M383.20 460.50 H388.30 M391.70 462.75 H396.30 M395.70 463.50 H400.30 M399.70 414.75 H404.05 M407.45 441.75 H412.05 M411.45 466.25 H416.05 M415.45 463.50 H420.30 M419.70 468.75 H424.30 M423.70 476.75 H428.30 M427.70 475.75 H432.30 M435.70 437.75 H440.55 M439.95 405.75 H444.80 M451.95 478.00 H456.80 M460.20 414.25 H464.55 M463.95 446.25 H468.55 M467.95 414.75 H472.55 M471.95 457.25 H476.55 M475.95 476.25 H480.30 M479.70 476.25 H481.30 M480.70 457.25 H485.30 M492.70 407.50 H497.55 M504.95 420.00 H509.55 M508.95 478.00 H513.80 M517.45 470.50 H522.05 M521.45 466.25 H525.80 M525.20 473.75 H530.05 M529.45 462.25 H533.80 M533.20 467.00 H537.80 M537.20 468.00 H541.80 M541.20 476.75 H546.30 M545.70 468.75 H549.80 M549.20 473.00 H554.05 M553.45 457.00 H557.80 M557.20 481.00 H562.30 M561.70 449.25 H566.05 M565.45 474.25 H570.30 M569.70 465.50 H573.80 M573.20 482.25 H578.55 M577.95 471.00 H582.30 M581.70 425.25 H586.55 M585.95 363.75 H590.55 M593.95 458.00 H598.55 M597.95 466.00 H602.80 M602.20 418.00 H606.55 M605.95 435.25 H610.55 M609.95 427.25 H614.55 M613.95 472.25 H618.80 M618.20 464.50 H622.80 M622.20 479.25 H626.80 M626.20 377.25 H630.80 M638.70 395.75 H642.55 M641.95 475.00 H647.05 M650.45 470.00 H655.30 M654.70 464.50 H659.05 M658.45 482.00 H663.05 M666.45 479.25 H671.30 M674.70 372.25 H678.80 M678.20 435.75 H683.05 M686.70 416.50 H691.30 M690.70 451.00 H695.55 M694.95 389.50 H699.30 M702.70 479.25 H707.80 M707.20 478.50 H711.55 M710.95 474.25 H719.80 M719.20 465.25 H724.05 M723.45 424.75 H728.55 M731.20 473.00 H736.30 M735.70 427.00 H744.30 M747.45 454.25 H752.05 M755.45 463.25 H760.55 M759.95 457.50 H764.30 M763.70 479.75 H768.30 M767.70 467.75 H772.30 M771.70 479.25 H776.30 M775.70 460.50 H780.05 M779.45 474.00 H784.30 M783.70 469.25 H788.05 M787.45 471.75 H792.05 M791.45 476.50 H796.30 M795.70 474.75 H800.30 M799.70 470.50 H804.30 M803.70 473.75 H808.05 M807.45 480.25 H812.05 M811.45 466.00 H816.05 M815.45 481.00 H820.30 M819.70 464.50 H824.30 M823.70 466.00 H828.30 M827.70 470.50 H832.05 M831.45 474.75 H836.05 M835.45 472.25 H839.80 M839.20 464.50 H843.80 M843.20 474.75 H847.80 M847.20 471.25 H851.80 M851.20 476.25 H855.55 M854.95 478.50 H859.80 M859.20 474.75 H863.80 M863.20 474.25 H867.55 M866.95 478.50 H871.55 M870.95 470.00 H875.55 M874.95 478.50 H879.55 M878.95 464.75 H883.55 M882.95 479.75 H887.55 M886.95 478.00 H891.55 M890.95 462.00 H895.55 M894.95 476.00 H899.55 M902.70 451.00 H907.55 M922.45 391.25 H927.30 M934.45 464.75 H939.05 M938.45 476.00 H943.05 M942.45 477.00 H947.30 M946.70 474.00 H955.30 M954.70 476.25 H959.30 M958.70 465.75 H963.05 M962.45 478.00 H967.05 M966.45 472.25 H970.30" fill="none" stroke="#141414" stroke-width="1.1"/>
<rect x="238.00" y="334.90" width="9.20" height="194.60" fill="#ff0000" />
<rect x="255.00" y="334.90" width="4.20" height="194.60" fill="#ff0000" />
<rect x="331.40" y="334.90" width="4.20" height="194.60" fill="#ff0000" />
<rect x="343.20" y="334.90" width="4.40" height="194.60" fill="#ff0000" />
<rect x="379.60" y="334.90" width="4.40" height="194.60" fill="#ff0000" />
<rect x="388.00" y="334.90" width="4.20" height="194.60" fill="#ff0000" />
<rect x="404.00" y="334.90" width="4.20" height="194.60" fill="#ff0000" />
<rect x="432.40" y="334.90" width="4.40" height="194.60" fill="#ff0000" />
<rect x="444.80" y="334.90" width="7.80" height="194.60" fill="#ff0000" />
<rect x="456.80" y="334.90" width="4.20" height="194.60" fill="#ff0000" />
<rect x="485.00" y="334.90" width="8.00" height="194.60" fill="#ff0000" />
<rect x="497.40" y="334.90" width="7.80" height="194.60" fill="#ff0000" />
<rect x="513.40" y="334.90" width="4.40" height="194.60" fill="#ff0000" />
<rect x="590.40" y="334.90" width="3.80" height="194.60" fill="#ff0000" />
<rect x="630.60" y="334.90" width="8.20" height="194.60" fill="#ff0000" />
<rect x="646.80" y="334.90" width="4.20" height="194.60" fill="#ff0000" />
<rect x="662.80" y="334.90" width="4.20" height="194.60" fill="#ff0000" />
<rect x="671.00" y="334.90" width="4.20" height="194.60" fill="#ff0000" />
<rect x="683.00" y="334.90" width="4.40" height="194.60" fill="#ff0000" />
<rect x="699.00" y="334.90" width="4.20" height="194.60" fill="#ff0000" />
<rect x="727.80" y="334.90" width="3.60" height="194.60" fill="#ff0000" />
<rect x="743.80" y="334.90" width="4.00" height="194.60" fill="#ff0000" />
<rect x="751.80" y="334.90" width="4.20" height="194.60" fill="#ff0000" />
<rect x="899.60" y="334.90" width="3.60" height="194.60" fill="#ff0000" />
<rect x="907.40" y="334.90" width="15.60" height="194.60" fill="#ff0000" />
<rect x="927.00" y="334.90" width="7.80" height="194.60" fill="#ff0000" />
<line x1="16.50" y1="334.90" x2="16.50" y2="529.50" stroke="#777" stroke-width="0.8" />
<line x1="16.50" y1="529.50" x2="970.40" y2="529.50" stroke="#8a8a8a" stroke-width="0.9" />
<text x="8.00" y="338.64" font-size="6.6" fill="#555" textLength="6.40" lengthAdjust="spacingAndGlyphs" >80</text>
<text x="11.20" y="528.54" font-size="6.6" fill="#555" textLength="3.20" lengthAdjust="spacingAndGlyphs" >0</text>
<text x="971.20" y="339.84" font-size="6.6" fill="#d02020" textLength="6.20" lengthAdjust="spacingAndGlyphs" >30</text>
<text transform="translate(14.1,448) rotate(-90)" font-size="5.8" fill="#4a3535" textLength="31.5" lengthAdjust="spacingAndGlyphs">Latency (ms)</text>
<text transform="translate(971.6,418.5) rotate(90)" font-size="5.8" fill="#c4283a" textLength="37.5" lengthAdjust="spacingAndGlyphs">Packet Loss %</text>
<text x="40.90" y="535.61" font-size="6.5" fill="#55635d" textLength="20.80" lengthAdjust="spacingAndGlyphs" >17:55:30</text>
<line x1="51.60" y1="529.80" x2="51.60" y2="531.20" stroke="#9a9a9a" stroke-width="0.5" />
<text x="88.64" y="535.61" font-size="6.5" fill="#55635d" textLength="20.80" lengthAdjust="spacingAndGlyphs" >17:56:00</text>
<line x1="99.34" y1="529.80" x2="99.34" y2="531.20" stroke="#9a9a9a" stroke-width="0.5" />
<text x="136.38" y="535.61" font-size="6.5" fill="#55635d" textLength="20.80" lengthAdjust="spacingAndGlyphs" >17:56:30</text>
<line x1="147.08" y1="529.80" x2="147.08" y2="531.20" stroke="#9a9a9a" stroke-width="0.5" />
<text x="184.12" y="535.61" font-size="6.5" fill="#55635d" textLength="20.80" lengthAdjust="spacingAndGlyphs" >17:57:00</text>
<line x1="194.82" y1="529.80" x2="194.82" y2="531.20" stroke="#9a9a9a" stroke-width="0.5" />
<text x="231.86" y="535.61" font-size="6.5" fill="#55635d" textLength="20.80" lengthAdjust="spacingAndGlyphs" >17:57:30</text>
<line x1="242.56" y1="529.80" x2="242.56" y2="531.20" stroke="#9a9a9a" stroke-width="0.5" />
<text x="279.60" y="535.61" font-size="6.5" fill="#55635d" textLength="20.80" lengthAdjust="spacingAndGlyphs" >17:58:00</text>
<line x1="290.30" y1="529.80" x2="290.30" y2="531.20" stroke="#9a9a9a" stroke-width="0.5" />
<text x="327.34" y="535.61" font-size="6.5" fill="#55635d" textLength="20.80" lengthAdjust="spacingAndGlyphs" >17:58:30</text>
<line x1="338.04" y1="529.80" x2="338.04" y2="531.20" stroke="#9a9a9a" stroke-width="0.5" />
<text x="375.08" y="535.61" font-size="6.5" fill="#55635d" textLength="20.80" lengthAdjust="spacingAndGlyphs" >17:59:00</text>
<line x1="385.78" y1="529.80" x2="385.78" y2="531.20" stroke="#9a9a9a" stroke-width="0.5" />
<text x="422.82" y="535.61" font-size="6.5" fill="#55635d" textLength="20.80" lengthAdjust="spacingAndGlyphs" >17:59:30</text>
<line x1="433.52" y1="529.80" x2="433.52" y2="531.20" stroke="#9a9a9a" stroke-width="0.5" />
<text x="470.56" y="535.61" font-size="6.5" fill="#55635d" textLength="20.80" lengthAdjust="spacingAndGlyphs" >18:00:00</text>
<line x1="481.26" y1="529.80" x2="481.26" y2="531.20" stroke="#9a9a9a" stroke-width="0.5" />
<text x="518.30" y="535.61" font-size="6.5" fill="#55635d" textLength="20.80" lengthAdjust="spacingAndGlyphs" >18:00:30</text>
<line x1="529.00" y1="529.80" x2="529.00" y2="531.20" stroke="#9a9a9a" stroke-width="0.5" />
<text x="566.04" y="535.61" font-size="6.5" fill="#55635d" textLength="20.80" lengthAdjust="spacingAndGlyphs" >18:01:00</text>
<line x1="576.74" y1="529.80" x2="576.74" y2="531.20" stroke="#9a9a9a" stroke-width="0.5" />
<text x="613.78" y="535.61" font-size="6.5" fill="#55635d" textLength="20.80" lengthAdjust="spacingAndGlyphs" >18:01:30</text>
<line x1="624.48" y1="529.80" x2="624.48" y2="531.20" stroke="#9a9a9a" stroke-width="0.5" />
<text x="661.52" y="535.61" font-size="6.5" fill="#55635d" textLength="20.80" lengthAdjust="spacingAndGlyphs" >18:02:00</text>
<line x1="672.22" y1="529.80" x2="672.22" y2="531.20" stroke="#9a9a9a" stroke-width="0.5" />
<text x="709.26" y="535.61" font-size="6.5" fill="#55635d" textLength="20.80" lengthAdjust="spacingAndGlyphs" >18:02:30</text>
<line x1="719.96" y1="529.80" x2="719.96" y2="531.20" stroke="#9a9a9a" stroke-width="0.5" />
<text x="757.00" y="535.61" font-size="6.5" fill="#55635d" textLength="20.80" lengthAdjust="spacingAndGlyphs" >18:03:00</text>
<line x1="767.70" y1="529.80" x2="767.70" y2="531.20" stroke="#9a9a9a" stroke-width="0.5" />
<text x="804.74" y="535.61" font-size="6.5" fill="#55635d" textLength="20.80" lengthAdjust="spacingAndGlyphs" >18:03:30</text>
<line x1="815.44" y1="529.80" x2="815.44" y2="531.20" stroke="#9a9a9a" stroke-width="0.5" />
<text x="852.48" y="535.61" font-size="6.5" fill="#55635d" textLength="20.80" lengthAdjust="spacingAndGlyphs" >18:04:00</text>
<line x1="863.18" y1="529.80" x2="863.18" y2="531.20" stroke="#9a9a9a" stroke-width="0.5" />
<text x="900.22" y="535.61" font-size="6.5" fill="#55635d" textLength="20.80" lengthAdjust="spacingAndGlyphs" >18:04:30</text>
<line x1="910.92" y1="529.80" x2="910.92" y2="531.20" stroke="#9a9a9a" stroke-width="0.5" />
<text x="947.96" y="535.61" font-size="6.5" fill="#55635d" textLength="20.80" lengthAdjust="spacingAndGlyphs" >18:05:00</text>
<line x1="958.66" y1="529.80" x2="958.66" y2="531.20" stroke="#9a9a9a" stroke-width="0.5" />
<rect x="985.80" y="59.50" width="14.00" height="482.00" fill="#f2f2f2" />
<rect x="997.00" y="59.00" width="2.00" height="482.00" fill="#eaeaea" />
<rect x="996.30" y="62.00" width="2.70" height="15.00" fill="#cdcdcd" />
<text transform="translate(989.0,62.5) rotate(90)" font-size="6" fill="#333" textLength="15.5" lengthAdjust="spacingAndGlyphs">Alerts</text>
</svg>
</body></html>
